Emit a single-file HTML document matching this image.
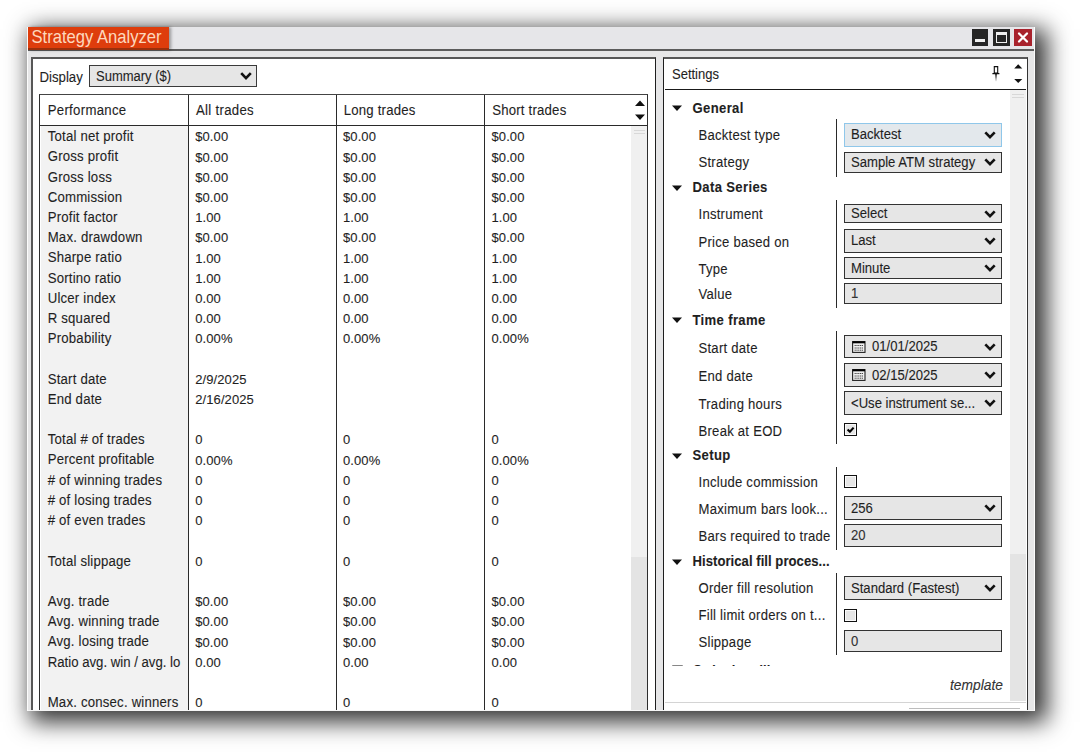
<!DOCTYPE html>
<html><head><meta charset="utf-8"><style>
html,body{margin:0;padding:0;}
body{width:1082px;height:752px;overflow:hidden;background:#fff;position:relative;font-family:"Liberation Sans", sans-serif;}
.t{position:absolute;white-space:nowrap;line-height:1;color:#1f1f1f;-webkit-text-stroke:0.1px #1f1f1f;}
.clip{position:absolute;left:0;top:0;width:1082px;height:709.5px;overflow:hidden;}
</style></head><body>
<div style="position:absolute;left:27px;top:27px;width:1008px;height:684px;background:#e6e6e7;box-shadow:7.25px 6.25px 22px 4.25px rgba(0,0,0,0.8);border-left:1px solid #fbfbfb;border-right:1px solid #fbfbfb;box-sizing:border-box;"></div>
<div class="clip">
<div style="position:absolute;left:28px;top:27px;width:1006px;height:23px;background:#e6e6e9;"></div>
<div style="position:absolute;left:28px;top:49px;width:1006px;height:2px;background:#5c5c5c;"></div>
<div style="position:absolute;left:28px;top:27px;width:140.5px;height:23px;background:#de3d0c;box-shadow:2px 0 3px rgba(0,0,0,0.35);"></div>
<div style="position:absolute;left:28px;top:48px;width:140.5px;height:2px;background:#9a300c;"></div>
<div class="t " style="left:31.5px;top:30.00px;font-size:16.6px;transform:scaleY(1.12);transform-origin:0 14.05px;color:#fdd8bd;-webkit-text-stroke:0.05px #fdd8bd;">Strategy Analyzer</div>
<div style="position:absolute;left:972px;top:29px;width:16px;height:16.5px;background:#262626;"></div>
<div style="position:absolute;left:975px;top:39px;width:10px;height:3px;background:#f0f0f0;"></div>
<div style="position:absolute;left:993px;top:29px;width:16.5px;height:16.5px;background:#262626;"></div>
<div style="position:absolute;left:996px;top:31.5px;width:10.5px;height:11.5px;background:#262626;border:1.5px solid #f0f0f0;border-top-width:3px;box-sizing:border-box;"></div>
<div style="position:absolute;left:1014px;top:29px;width:18px;height:16.5px;background:#a8222c;"></div>
<svg style="position:absolute;left:1014px;top:29px" width="18" height="17" viewBox="0 0 18 17"><path d="M5 4.5 L13 12.5 M13 4.5 L5 12.5" stroke="#fff" stroke-width="2.3" stroke-linecap="round"/></svg>
<div style="position:absolute;left:31px;top:57px;width:625.2px;height:663px;background:#fff;border:2px solid #575757;border-right:1.3px solid #1e1e1e;box-sizing:border-box;"></div>
<div class="t " style="left:39.5px;top:71.00px;font-size:13.2px;transform:scaleY(1.08);transform-origin:0 11.17px;">Display</div>
<div style="position:absolute;left:89px;top:65.4px;width:168px;height:22.0px;background:#e6e6e6;border:1.5px solid #3a3a3a;box-sizing:border-box;"></div>
<div class="t " style="left:96px;top:70.00px;font-size:13.0px;transform:scaleY(1.08);transform-origin:0 11.00px;">Summary ($)</div>
<svg style="position:absolute;left:239px;top:70px" width="14" height="12" viewBox="0 0 14 12"><path d="M2.2 3.2 L7 8.2 L11.8 3.2" fill="none" stroke="#111" stroke-width="2.6"/></svg>
<div style="position:absolute;left:39px;top:94.3px;width:609.3px;height:625.7px;background:#fff;border:1.5px solid #2e2e2e;border-top:1.8px solid #444;box-sizing:border-box;"></div>
<div style="position:absolute;left:40.5px;top:126px;width:147.5px;height:594px;background:#f2f2f2;"></div>
<div style="position:absolute;left:631px;top:126px;width:16px;height:594px;background:#e4e4e4;"></div>
<div style="position:absolute;left:631px;top:126px;width:16px;height:430.5px;background:#f0f0f0;"></div>
<div style="position:absolute;left:633.5px;top:129.5px;width:11.5px;height:1.0px;background:#d8d8d8;"></div>
<div style="position:absolute;left:633.5px;top:132.8px;width:11.5px;height:1.0px;background:#d8d8d8;"></div>
<div style="position:absolute;left:40px;top:124.8px;width:607px;height:1.4000000000000057px;background:#2a2a2a;"></div>
<div style="position:absolute;left:187.6px;top:95px;width:1.4000000000000057px;height:625px;background:#2a2a2a;"></div>
<div style="position:absolute;left:335.6px;top:95px;width:1.3999999999999773px;height:625px;background:#2a2a2a;"></div>
<div style="position:absolute;left:484.1px;top:95px;width:1.3999999999999773px;height:625px;background:#2a2a2a;"></div>
<svg style="position:absolute;left:633px;top:98px" width="14" height="26" viewBox="0 0 14 26"><path d="M2 8 L7 2.5 L12 8 Z M2 16.5 L12 16.5 L7 22 Z" fill="#111"/></svg>
<div class="t " style="left:47.7px;top:104.00px;font-size:13.2px;transform:scaleY(1.08);transform-origin:0 11.17px;letter-spacing:0.3px;">Performance</div>
<div class="t " style="left:196px;top:104.00px;font-size:13.2px;transform:scaleY(1.08);transform-origin:0 11.17px;letter-spacing:0.3px;">All trades</div>
<div class="t " style="left:343.7px;top:104.00px;font-size:13.2px;transform:scaleY(1.08);transform-origin:0 11.17px;letter-spacing:0.2px;">Long trades</div>
<div class="t " style="left:492.2px;top:104.00px;font-size:13.2px;transform:scaleY(1.08);transform-origin:0 11.17px;letter-spacing:0.2px;">Short trades</div>
<div class="t " style="left:47.7px;top:130.00px;font-size:13.2px;transform:scaleY(1.08);transform-origin:0 11.17px;letter-spacing:0.2px;">Total net profit</div>
<div class="t n" style="left:195.2px;top:130.00px;font-size:13.0px;letter-spacing:0.1px;">$0.00</div>
<div class="t n" style="left:343px;top:130.00px;font-size:13.0px;letter-spacing:0.1px;">$0.00</div>
<div class="t n" style="left:491.5px;top:130.00px;font-size:13.0px;letter-spacing:0.1px;">$0.00</div>
<div class="t " style="left:47.7px;top:150.00px;font-size:13.2px;transform:scaleY(1.08);transform-origin:0 11.17px;letter-spacing:0.2px;">Gross profit</div>
<div class="t n" style="left:195.2px;top:151.00px;font-size:13.0px;letter-spacing:0.1px;">$0.00</div>
<div class="t n" style="left:343px;top:151.00px;font-size:13.0px;letter-spacing:0.1px;">$0.00</div>
<div class="t n" style="left:491.5px;top:151.00px;font-size:13.0px;letter-spacing:0.1px;">$0.00</div>
<div class="t " style="left:47.7px;top:171.00px;font-size:13.2px;transform:scaleY(1.08);transform-origin:0 11.17px;letter-spacing:0.2px;">Gross loss</div>
<div class="t n" style="left:195.2px;top:171.00px;font-size:13.0px;letter-spacing:0.1px;">$0.00</div>
<div class="t n" style="left:343px;top:171.00px;font-size:13.0px;letter-spacing:0.1px;">$0.00</div>
<div class="t n" style="left:491.5px;top:171.00px;font-size:13.0px;letter-spacing:0.1px;">$0.00</div>
<div class="t " style="left:47.7px;top:191.00px;font-size:13.2px;transform:scaleY(1.08);transform-origin:0 11.17px;letter-spacing:0.2px;">Commission</div>
<div class="t n" style="left:195.2px;top:191.00px;font-size:13.0px;letter-spacing:0.1px;">$0.00</div>
<div class="t n" style="left:343px;top:191.00px;font-size:13.0px;letter-spacing:0.1px;">$0.00</div>
<div class="t n" style="left:491.5px;top:191.00px;font-size:13.0px;letter-spacing:0.1px;">$0.00</div>
<div class="t " style="left:47.7px;top:211.00px;font-size:13.2px;transform:scaleY(1.08);transform-origin:0 11.17px;letter-spacing:0.2px;">Profit factor</div>
<div class="t n" style="left:195.2px;top:211.00px;font-size:13.0px;letter-spacing:0.1px;">1.00</div>
<div class="t n" style="left:343px;top:211.00px;font-size:13.0px;letter-spacing:0.1px;">1.00</div>
<div class="t n" style="left:491.5px;top:211.00px;font-size:13.0px;letter-spacing:0.1px;">1.00</div>
<div class="t " style="left:47.7px;top:231.00px;font-size:13.2px;transform:scaleY(1.08);transform-origin:0 11.17px;letter-spacing:0.2px;">Max. drawdown</div>
<div class="t n" style="left:195.2px;top:231.00px;font-size:13.0px;letter-spacing:0.1px;">$0.00</div>
<div class="t n" style="left:343px;top:231.00px;font-size:13.0px;letter-spacing:0.1px;">$0.00</div>
<div class="t n" style="left:491.5px;top:231.00px;font-size:13.0px;letter-spacing:0.1px;">$0.00</div>
<div class="t " style="left:47.7px;top:251.00px;font-size:13.2px;transform:scaleY(1.08);transform-origin:0 11.17px;letter-spacing:0.2px;">Sharpe ratio</div>
<div class="t n" style="left:195.2px;top:252.00px;font-size:13.0px;letter-spacing:0.1px;">1.00</div>
<div class="t n" style="left:343px;top:252.00px;font-size:13.0px;letter-spacing:0.1px;">1.00</div>
<div class="t n" style="left:491.5px;top:252.00px;font-size:13.0px;letter-spacing:0.1px;">1.00</div>
<div class="t " style="left:47.7px;top:272.00px;font-size:13.2px;transform:scaleY(1.08);transform-origin:0 11.17px;letter-spacing:0.2px;">Sortino ratio</div>
<div class="t n" style="left:195.2px;top:272.00px;font-size:13.0px;letter-spacing:0.1px;">1.00</div>
<div class="t n" style="left:343px;top:272.00px;font-size:13.0px;letter-spacing:0.1px;">1.00</div>
<div class="t n" style="left:491.5px;top:272.00px;font-size:13.0px;letter-spacing:0.1px;">1.00</div>
<div class="t " style="left:47.7px;top:292.00px;font-size:13.2px;transform:scaleY(1.08);transform-origin:0 11.17px;letter-spacing:0.2px;">Ulcer index</div>
<div class="t n" style="left:195.2px;top:292.00px;font-size:13.0px;letter-spacing:0.1px;">0.00</div>
<div class="t n" style="left:343px;top:292.00px;font-size:13.0px;letter-spacing:0.1px;">0.00</div>
<div class="t n" style="left:491.5px;top:292.00px;font-size:13.0px;letter-spacing:0.1px;">0.00</div>
<div class="t " style="left:47.7px;top:312.00px;font-size:13.2px;transform:scaleY(1.08);transform-origin:0 11.17px;letter-spacing:0.2px;">R squared</div>
<div class="t n" style="left:195.2px;top:312.00px;font-size:13.0px;letter-spacing:0.1px;">0.00</div>
<div class="t n" style="left:343px;top:312.00px;font-size:13.0px;letter-spacing:0.1px;">0.00</div>
<div class="t n" style="left:491.5px;top:312.00px;font-size:13.0px;letter-spacing:0.1px;">0.00</div>
<div class="t " style="left:47.7px;top:332.00px;font-size:13.2px;transform:scaleY(1.08);transform-origin:0 11.17px;letter-spacing:0.2px;">Probability</div>
<div class="t n" style="left:195.2px;top:332.00px;font-size:13.0px;letter-spacing:0.1px;">0.00%</div>
<div class="t n" style="left:343px;top:332.00px;font-size:13.0px;letter-spacing:0.1px;">0.00%</div>
<div class="t n" style="left:491.5px;top:332.00px;font-size:13.0px;letter-spacing:0.1px;">0.00%</div>
<div class="t " style="left:47.7px;top:373.00px;font-size:13.2px;transform:scaleY(1.08);transform-origin:0 11.17px;letter-spacing:0.2px;">Start date</div>
<div class="t n" style="left:195.2px;top:373.00px;font-size:13.0px;letter-spacing:0.1px;">2/9/2025</div>
<div class="t " style="left:47.7px;top:393.00px;font-size:13.2px;transform:scaleY(1.08);transform-origin:0 11.17px;letter-spacing:0.2px;">End date</div>
<div class="t n" style="left:195.2px;top:393.00px;font-size:13.0px;letter-spacing:0.1px;">2/16/2025</div>
<div class="t " style="left:47.7px;top:433.00px;font-size:13.2px;transform:scaleY(1.08);transform-origin:0 11.17px;letter-spacing:0.2px;">Total # of trades</div>
<div class="t n" style="left:195.2px;top:433.00px;font-size:13.0px;letter-spacing:0.1px;">0</div>
<div class="t n" style="left:343px;top:433.00px;font-size:13.0px;letter-spacing:0.1px;">0</div>
<div class="t n" style="left:491.5px;top:433.00px;font-size:13.0px;letter-spacing:0.1px;">0</div>
<div class="t " style="left:47.7px;top:453.00px;font-size:13.2px;transform:scaleY(1.08);transform-origin:0 11.17px;letter-spacing:0.2px;">Percent profitable</div>
<div class="t n" style="left:195.2px;top:454.00px;font-size:13.0px;letter-spacing:0.1px;">0.00%</div>
<div class="t n" style="left:343px;top:454.00px;font-size:13.0px;letter-spacing:0.1px;">0.00%</div>
<div class="t n" style="left:491.5px;top:454.00px;font-size:13.0px;letter-spacing:0.1px;">0.00%</div>
<div class="t " style="left:47.7px;top:474.00px;font-size:13.2px;transform:scaleY(1.08);transform-origin:0 11.17px;letter-spacing:0.2px;"># of winning trades</div>
<div class="t n" style="left:195.2px;top:474.00px;font-size:13.0px;letter-spacing:0.1px;">0</div>
<div class="t n" style="left:343px;top:474.00px;font-size:13.0px;letter-spacing:0.1px;">0</div>
<div class="t n" style="left:491.5px;top:474.00px;font-size:13.0px;letter-spacing:0.1px;">0</div>
<div class="t " style="left:47.7px;top:494.00px;font-size:13.2px;transform:scaleY(1.08);transform-origin:0 11.17px;letter-spacing:0.2px;"># of losing trades</div>
<div class="t n" style="left:195.2px;top:494.00px;font-size:13.0px;letter-spacing:0.1px;">0</div>
<div class="t n" style="left:343px;top:494.00px;font-size:13.0px;letter-spacing:0.1px;">0</div>
<div class="t n" style="left:491.5px;top:494.00px;font-size:13.0px;letter-spacing:0.1px;">0</div>
<div class="t " style="left:47.7px;top:514.00px;font-size:13.2px;transform:scaleY(1.08);transform-origin:0 11.17px;letter-spacing:0.2px;"># of even trades</div>
<div class="t n" style="left:195.2px;top:514.00px;font-size:13.0px;letter-spacing:0.1px;">0</div>
<div class="t n" style="left:343px;top:514.00px;font-size:13.0px;letter-spacing:0.1px;">0</div>
<div class="t n" style="left:491.5px;top:514.00px;font-size:13.0px;letter-spacing:0.1px;">0</div>
<div class="t " style="left:47.7px;top:555.00px;font-size:13.2px;transform:scaleY(1.08);transform-origin:0 11.17px;letter-spacing:0.2px;">Total slippage</div>
<div class="t n" style="left:195.2px;top:555.00px;font-size:13.0px;letter-spacing:0.1px;">0</div>
<div class="t n" style="left:343px;top:555.00px;font-size:13.0px;letter-spacing:0.1px;">0</div>
<div class="t n" style="left:491.5px;top:555.00px;font-size:13.0px;letter-spacing:0.1px;">0</div>
<div class="t " style="left:47.7px;top:595.00px;font-size:13.2px;transform:scaleY(1.08);transform-origin:0 11.17px;letter-spacing:0.2px;">Avg. trade</div>
<div class="t n" style="left:195.2px;top:595.00px;font-size:13.0px;letter-spacing:0.1px;">$0.00</div>
<div class="t n" style="left:343px;top:595.00px;font-size:13.0px;letter-spacing:0.1px;">$0.00</div>
<div class="t n" style="left:491.5px;top:595.00px;font-size:13.0px;letter-spacing:0.1px;">$0.00</div>
<div class="t " style="left:47.7px;top:615.00px;font-size:13.2px;transform:scaleY(1.08);transform-origin:0 11.17px;letter-spacing:0.2px;">Avg. winning trade</div>
<div class="t n" style="left:195.2px;top:615.00px;font-size:13.0px;letter-spacing:0.1px;">$0.00</div>
<div class="t n" style="left:343px;top:615.00px;font-size:13.0px;letter-spacing:0.1px;">$0.00</div>
<div class="t n" style="left:491.5px;top:615.00px;font-size:13.0px;letter-spacing:0.1px;">$0.00</div>
<div class="t " style="left:47.7px;top:635.00px;font-size:13.2px;transform:scaleY(1.08);transform-origin:0 11.17px;letter-spacing:0.2px;">Avg. losing trade</div>
<div class="t n" style="left:195.2px;top:636.00px;font-size:13.0px;letter-spacing:0.1px;">$0.00</div>
<div class="t n" style="left:343px;top:636.00px;font-size:13.0px;letter-spacing:0.1px;">$0.00</div>
<div class="t n" style="left:491.5px;top:636.00px;font-size:13.0px;letter-spacing:0.1px;">$0.00</div>
<div class="t " style="left:47.7px;top:656.00px;font-size:13.2px;transform:scaleY(1.08);transform-origin:0 11.17px;letter-spacing:0px;">Ratio avg. win / avg. lo</div>
<div class="t n" style="left:195.2px;top:656.00px;font-size:13.0px;letter-spacing:0.1px;">0.00</div>
<div class="t n" style="left:343px;top:656.00px;font-size:13.0px;letter-spacing:0.1px;">0.00</div>
<div class="t n" style="left:491.5px;top:656.00px;font-size:13.0px;letter-spacing:0.1px;">0.00</div>
<div class="t " style="left:47.7px;top:696.00px;font-size:13.2px;transform:scaleY(1.08);transform-origin:0 11.17px;letter-spacing:0.2px;">Max. consec. winners</div>
<div class="t n" style="left:195.2px;top:696.00px;font-size:13.0px;letter-spacing:0.1px;">0</div>
<div class="t n" style="left:343px;top:696.00px;font-size:13.0px;letter-spacing:0.1px;">0</div>
<div class="t n" style="left:491.5px;top:696.00px;font-size:13.0px;letter-spacing:0.1px;">0</div>
<div style="position:absolute;left:662.8px;top:57px;width:365.70000000000005px;height:663px;background:#fff;border:2px solid #575757;border-left:1.3px solid #1e1e1e;border-right:1.8px solid #333;box-sizing:border-box;"></div>
<div class="t " style="left:672px;top:68.00px;font-size:13.0px;transform:scaleY(1.08);transform-origin:0 11.00px;">Settings</div>
<div style="position:absolute;left:665px;top:88.6px;width:361px;height:1.4000000000000057px;background:#1a1a1a;"></div>
<svg style="position:absolute;left:990px;top:62px" width="12" height="22" viewBox="0 0 12 22"><path d="M4.3 4.6 H7.7 V11 H4.3 Z" fill="#fff" stroke="#111" stroke-width="1.1"/><path d="M2.4 11.6 H9.4" stroke="#111" stroke-width="1.3"/><path d="M5.2 12 L6.8 12 L6 19.5 Z" fill="#111"/></svg>
<svg style="position:absolute;left:1011px;top:62px" width="14" height="24" viewBox="0 0 14 24"><path d="M3.2 6.4 L7.2 2.3 L11.3 6.4 Z M3.2 17 L11.3 17 L7.2 21 Z" fill="#111"/></svg>
<div style="position:absolute;left:1010px;top:90px;width:16px;height:611px;background:#e4e4e4;"></div>
<div style="position:absolute;left:1010px;top:90px;width:16px;height:464px;background:#f0f0f0;"></div>
<div style="position:absolute;left:1012px;top:93.5px;width:12px;height:1.0px;background:#d8d8d8;"></div>
<div style="position:absolute;left:1012px;top:96.8px;width:12px;height:1.0px;background:#d8d8d8;"></div>
<div style="position:absolute;left:665px;top:701.5px;width:361px;height:1.0px;background:#d4d4d4;"></div>
<div style="position:absolute;left:909px;top:708px;width:111px;height:1px;background:#bdbdbd;"></div>
<svg style="position:absolute;left:671px;top:104.3px" width="13" height="8" viewBox="0 0 13 8"><path d="M1 1.4 L11 1.4 L6 7 Z" fill="#111"/></svg>
<div class="t " style="left:692.5px;top:102.00px;font-size:13.1px;transform:scaleY(1.08);transform-origin:0 11.09px;font-weight:bold;letter-spacing:0.35px;">General</div>
<div class="t " style="left:698.5px;top:129.00px;font-size:13.1px;transform:scaleY(1.08);transform-origin:0 11.09px;letter-spacing:0.25px;">Backtest type</div>
<div style="position:absolute;left:844px;top:122.9px;width:157.5px;height:23.900000000000006px;background:#e3e8ec;border:1.5px solid #8fc7ea;box-sizing:border-box;"></div>
<div class="t " style="left:851px;top:128.00px;font-size:13.1px;transform:scaleY(1.08);transform-origin:0 11.09px;">Backtest</div>
<svg style="position:absolute;left:983px;top:128.9px" width="14" height="12" viewBox="0 0 14 12"><path d="M2.3 3.3 L7 8.2 L11.7 3.3" fill="none" stroke="#111" stroke-width="2.6"/></svg>
<div class="t " style="left:698.5px;top:156.00px;font-size:13.1px;transform:scaleY(1.08);transform-origin:0 11.09px;letter-spacing:0.25px;">Strategy</div>
<div style="position:absolute;left:844px;top:151.6px;width:157.5px;height:21.200000000000017px;background:#e6e6e6;border:1.5px solid #333;box-sizing:border-box;"></div>
<div class="t " style="left:851px;top:156.00px;font-size:13.1px;transform:scaleY(1.08);transform-origin:0 11.09px;">Sample ATM strategy</div>
<svg style="position:absolute;left:983px;top:156.2px" width="14" height="12" viewBox="0 0 14 12"><path d="M2.3 3.3 L7 8.2 L11.7 3.3" fill="none" stroke="#111" stroke-width="2.6"/></svg>
<div style="position:absolute;left:836.2px;top:119px;width:1.1999999999999318px;height:57.5px;background:#2a2a2a;"></div>
<svg style="position:absolute;left:671px;top:184px" width="13" height="8" viewBox="0 0 13 8"><path d="M1 1.4 L11 1.4 L6 7 Z" fill="#111"/></svg>
<div class="t " style="left:692.5px;top:181.00px;font-size:13.1px;transform:scaleY(1.08);transform-origin:0 11.09px;font-weight:bold;letter-spacing:0.35px;">Data Series</div>
<div class="t " style="left:698.5px;top:208.00px;font-size:13.1px;transform:scaleY(1.08);transform-origin:0 11.09px;letter-spacing:0.25px;">Instrument</div>
<div style="position:absolute;left:844px;top:204.3px;width:157.5px;height:18.69999999999999px;background:#e6e6e6;border:1.5px solid #333;box-sizing:border-box;"></div>
<div class="t " style="left:851px;top:207.00px;font-size:13.1px;transform:scaleY(1.08);transform-origin:0 11.09px;">Select</div>
<svg style="position:absolute;left:983px;top:207.7px" width="14" height="12" viewBox="0 0 14 12"><path d="M2.3 3.3 L7 8.2 L11.7 3.3" fill="none" stroke="#111" stroke-width="2.6"/></svg>
<div class="t " style="left:698.5px;top:236.00px;font-size:13.1px;transform:scaleY(1.08);transform-origin:0 11.09px;letter-spacing:0.25px;">Price based on</div>
<div style="position:absolute;left:844px;top:228.5px;width:157.5px;height:24.0px;background:#e6e6e6;border:1.5px solid #333;box-sizing:border-box;"></div>
<div class="t " style="left:851px;top:234.00px;font-size:13.1px;transform:scaleY(1.08);transform-origin:0 11.09px;">Last</div>
<svg style="position:absolute;left:983px;top:234.5px" width="14" height="12" viewBox="0 0 14 12"><path d="M2.3 3.3 L7 8.2 L11.7 3.3" fill="none" stroke="#111" stroke-width="2.6"/></svg>
<div class="t " style="left:698.5px;top:263.00px;font-size:13.1px;transform:scaleY(1.08);transform-origin:0 11.09px;letter-spacing:0.25px;">Type</div>
<div style="position:absolute;left:844px;top:257px;width:157.5px;height:22px;background:#e6e6e6;border:1.5px solid #333;box-sizing:border-box;"></div>
<div class="t " style="left:851px;top:262.00px;font-size:13.1px;transform:scaleY(1.08);transform-origin:0 11.09px;">Minute</div>
<svg style="position:absolute;left:983px;top:262.0px" width="14" height="12" viewBox="0 0 14 12"><path d="M2.3 3.3 L7 8.2 L11.7 3.3" fill="none" stroke="#111" stroke-width="2.6"/></svg>
<div class="t " style="left:698.5px;top:288.00px;font-size:13.1px;transform:scaleY(1.08);transform-origin:0 11.09px;letter-spacing:0.25px;">Value</div>
<div style="position:absolute;left:844px;top:282.6px;width:157.5px;height:21.899999999999977px;background:#e6e6e6;border:1.5px solid #333;box-sizing:border-box;"></div>
<div class="t " style="left:851px;top:287.00px;font-size:13.1px;transform:scaleY(1.08);transform-origin:0 11.09px;color:#333;">1</div>
<div style="position:absolute;left:836.2px;top:199.6px;width:1.1999999999999318px;height:108.4px;background:#2a2a2a;"></div>
<svg style="position:absolute;left:671px;top:316.3px" width="13" height="8" viewBox="0 0 13 8"><path d="M1 1.4 L11 1.4 L6 7 Z" fill="#111"/></svg>
<div class="t " style="left:692.5px;top:314.00px;font-size:13.1px;transform:scaleY(1.08);transform-origin:0 11.09px;font-weight:bold;letter-spacing:0.35px;">Time frame</div>
<div class="t " style="left:698.5px;top:342.00px;font-size:13.1px;transform:scaleY(1.08);transform-origin:0 11.09px;letter-spacing:0.25px;">Start date</div>
<div style="position:absolute;left:844px;top:334.6px;width:157.5px;height:23.899999999999977px;background:#e6e6e6;border:1.5px solid #333;box-sizing:border-box;"></div>
<svg style="position:absolute;left:852px;top:340.9px" width="14" height="12" viewBox="0 0 14 12"><rect x="0.6" y="0.6" width="12.4" height="10.8" fill="#eee" stroke="#222" stroke-width="1.1"/><rect x="0.6" y="0.3" width="12.4" height="2" fill="#000"/><path d="M2.6 4.5h8.4M2.6 7h8.4M2.6 9.2h8.4" stroke="#333" stroke-width="0.9" stroke-dasharray="1.2 0.6"/></svg>
<div class="t " style="left:872px;top:340.00px;font-size:13.1px;transform:scaleY(1.08);transform-origin:0 11.09px;">01/01/2025</div>
<svg style="position:absolute;left:983px;top:340.6px" width="14" height="12" viewBox="0 0 14 12"><path d="M2.3 3.3 L7 8.2 L11.7 3.3" fill="none" stroke="#111" stroke-width="2.6"/></svg>
<div class="t " style="left:698.5px;top:370.00px;font-size:13.1px;transform:scaleY(1.08);transform-origin:0 11.09px;letter-spacing:0.25px;">End date</div>
<div style="position:absolute;left:844px;top:363px;width:157.5px;height:24px;background:#e6e6e6;border:1.5px solid #333;box-sizing:border-box;"></div>
<svg style="position:absolute;left:852px;top:369.4px" width="14" height="12" viewBox="0 0 14 12"><rect x="0.6" y="0.6" width="12.4" height="10.8" fill="#eee" stroke="#222" stroke-width="1.1"/><rect x="0.6" y="0.3" width="12.4" height="2" fill="#000"/><path d="M2.6 4.5h8.4M2.6 7h8.4M2.6 9.2h8.4" stroke="#333" stroke-width="0.9" stroke-dasharray="1.2 0.6"/></svg>
<div class="t " style="left:872px;top:369.00px;font-size:13.1px;transform:scaleY(1.08);transform-origin:0 11.09px;">02/15/2025</div>
<svg style="position:absolute;left:983px;top:369.0px" width="14" height="12" viewBox="0 0 14 12"><path d="M2.3 3.3 L7 8.2 L11.7 3.3" fill="none" stroke="#111" stroke-width="2.6"/></svg>
<div class="t " style="left:698.5px;top:398.00px;font-size:13.1px;transform:scaleY(1.08);transform-origin:0 11.09px;letter-spacing:0.25px;">Trading hours</div>
<div style="position:absolute;left:844px;top:391px;width:157.5px;height:24px;background:#e6e6e6;border:1.5px solid #333;box-sizing:border-box;"></div>
<div class="t " style="left:851px;top:397.00px;font-size:13.1px;transform:scaleY(1.08);transform-origin:0 11.09px;">&lt;Use instrument se...</div>
<svg style="position:absolute;left:983px;top:397.0px" width="14" height="12" viewBox="0 0 14 12"><path d="M2.3 3.3 L7 8.2 L11.7 3.3" fill="none" stroke="#111" stroke-width="2.6"/></svg>
<div class="t " style="left:698.5px;top:425.00px;font-size:13.1px;transform:scaleY(1.08);transform-origin:0 11.09px;letter-spacing:0.25px;">Break at EOD</div>
<div style="position:absolute;left:844.2px;top:423.1px;width:13.099999999999909px;height:13.0px;background:#e6e6e6;border:1.3px solid #111;box-shadow:inset 0 0 0 1px #fafafa;box-sizing:border-box;"></div>
<svg style="position:absolute;left:844.2px;top:423.1px" width="13" height="13" viewBox="0 0 13 13"><path d="M3.6 6.4 L5.9 8.8 L9.6 4.6" fill="none" stroke="#000" stroke-width="2.1" stroke-linejoin="round"/></svg>
<div style="position:absolute;left:836.2px;top:330.5px;width:1.1999999999999318px;height:113.5px;background:#2a2a2a;"></div>
<svg style="position:absolute;left:671px;top:451.7px" width="13" height="8" viewBox="0 0 13 8"><path d="M1 1.4 L11 1.4 L6 7 Z" fill="#111"/></svg>
<div class="t " style="left:692.5px;top:449.00px;font-size:13.1px;transform:scaleY(1.08);transform-origin:0 11.09px;font-weight:bold;letter-spacing:0.35px;">Setup</div>
<div class="t " style="left:698.5px;top:476.00px;font-size:13.1px;transform:scaleY(1.08);transform-origin:0 11.09px;letter-spacing:0.25px;">Include commission</div>
<div style="position:absolute;left:844.2px;top:475px;width:13.099999999999909px;height:13px;background:#e6e6e6;border:1.3px solid #111;box-shadow:inset 0 0 0 1px #fafafa;box-sizing:border-box;"></div>
<div class="t " style="left:698.5px;top:503.00px;font-size:13.1px;transform:scaleY(1.08);transform-origin:0 11.09px;letter-spacing:0.25px;">Maximum bars look...</div>
<div style="position:absolute;left:844px;top:496.4px;width:157.5px;height:23.600000000000023px;background:#e6e6e6;border:1.5px solid #333;box-sizing:border-box;"></div>
<div class="t " style="left:851px;top:502.00px;font-size:13.1px;transform:scaleY(1.08);transform-origin:0 11.09px;">256</div>
<svg style="position:absolute;left:983px;top:502.2px" width="14" height="12" viewBox="0 0 14 12"><path d="M2.3 3.3 L7 8.2 L11.7 3.3" fill="none" stroke="#111" stroke-width="2.6"/></svg>
<div class="t " style="left:698.5px;top:530.00px;font-size:13.1px;transform:scaleY(1.08);transform-origin:0 11.09px;letter-spacing:0.25px;">Bars required to trade</div>
<div style="position:absolute;left:844px;top:524.3px;width:157.5px;height:22.300000000000068px;background:#e6e6e6;border:1.5px solid #333;box-sizing:border-box;"></div>
<div class="t " style="left:851px;top:529.00px;font-size:13.1px;transform:scaleY(1.08);transform-origin:0 11.09px;color:#333;">20</div>
<div style="position:absolute;left:836.2px;top:467px;width:1.1999999999999318px;height:82.5px;background:#2a2a2a;"></div>
<svg style="position:absolute;left:671px;top:557.6px" width="13" height="8" viewBox="0 0 13 8"><path d="M1 1.4 L11 1.4 L6 7 Z" fill="#111"/></svg>
<div class="t " style="left:692.5px;top:555.00px;font-size:13.1px;transform:scaleY(1.08);transform-origin:0 11.09px;font-weight:bold;letter-spacing:0.04px;">Historical fill proces...</div>
<div class="t " style="left:698.5px;top:582.00px;font-size:13.1px;transform:scaleY(1.08);transform-origin:0 11.09px;letter-spacing:0.25px;">Order fill resolution</div>
<div style="position:absolute;left:844px;top:576.4px;width:157.5px;height:24.0px;background:#e6e6e6;border:1.5px solid #333;box-sizing:border-box;"></div>
<div class="t " style="left:851px;top:582.00px;font-size:13.1px;transform:scaleY(1.08);transform-origin:0 11.09px;">Standard (Fastest)</div>
<svg style="position:absolute;left:983px;top:582.4px" width="14" height="12" viewBox="0 0 14 12"><path d="M2.3 3.3 L7 8.2 L11.7 3.3" fill="none" stroke="#111" stroke-width="2.6"/></svg>
<div class="t " style="left:698.5px;top:609.00px;font-size:13.1px;transform:scaleY(1.08);transform-origin:0 11.09px;letter-spacing:0.25px;">Fill limit orders on t...</div>
<div style="position:absolute;left:844.2px;top:608.9px;width:13.099999999999909px;height:13.0px;background:#e6e6e6;border:1.3px solid #111;box-shadow:inset 0 0 0 1px #fafafa;box-sizing:border-box;"></div>
<div class="t " style="left:698.5px;top:636.00px;font-size:13.1px;transform:scaleY(1.08);transform-origin:0 11.09px;letter-spacing:0.25px;">Slippage</div>
<div style="position:absolute;left:844px;top:630.2px;width:157.5px;height:22.299999999999955px;background:#e6e6e6;border:1.5px solid #333;box-sizing:border-box;"></div>
<div class="t " style="left:851px;top:635.00px;font-size:13.1px;transform:scaleY(1.08);transform-origin:0 11.09px;color:#333;">0</div>
<div style="position:absolute;left:836.2px;top:572.8px;width:1.1999999999999318px;height:82.60000000000002px;background:#2a2a2a;"></div>
<div style="position:absolute;left:665px;top:658px;width:340px;height:8px;overflow:hidden">
<svg style="position:absolute;left:6px;top:6px" width="13" height="8" viewBox="0 0 13 8"><path d="M1 1.5 L12 1.5 L6.5 7 Z" fill="#111"/></svg>
<div class="t" style="left:27.5px;top:4.91px;font-size:13.1px;font-weight:bold">Order handling</div>
</div>
<div class="t " style="left:950px;top:679.00px;font-size:13.8px;transform:scaleY(1.08);transform-origin:0 11.68px;font-style:italic;color:#333;">template</div>
</div>
<div style="position:absolute;left:28px;top:709.5px;width:1006px;height:1.5px;background:#f6f6f6;"></div>
</body></html>
